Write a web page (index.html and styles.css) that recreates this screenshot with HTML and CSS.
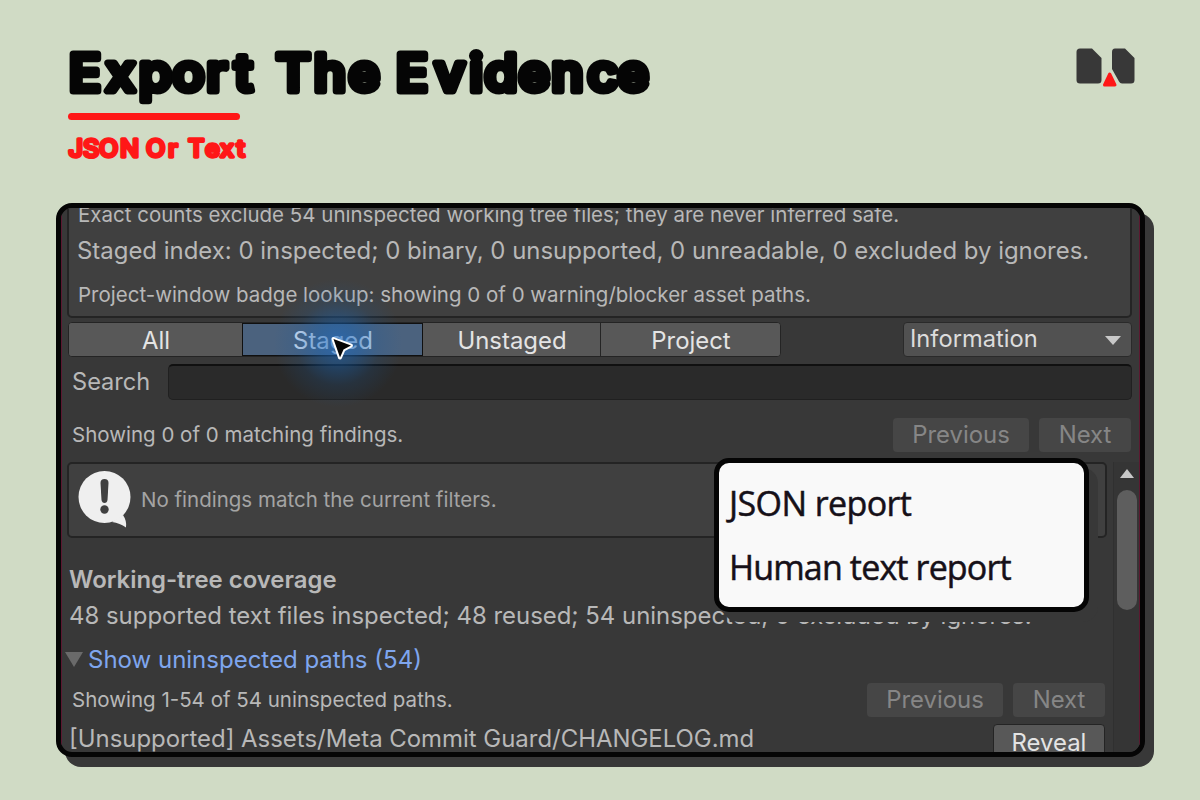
FILE: index.html
```html
<!DOCTYPE html>
<html lang="en">
<head>
    <meta charset="UTF-8">
    <meta name="viewport" content="width=device-width, initial-scale=1.0">
    <title>Export The Evidence</title>
    <link rel="stylesheet" href="styles.css">
</head>
<body>
    <header class="header">
        <div class="titles">
            <h1 class="title">
                <svg width="600" height="69" viewBox="0 0 600 69">
                    <g transform="scale(1.05 1)">
                        <text y="47" x="1 36 67.600 99.500 131.900 158.500">Export</text>
                        <text y="47" x="198.100 234.300 267.100">The</text>
                        <text y="47" x="312.400 349 382.400 396.700 429 460.500 494.800 523.300">Evidence</text>
                    </g>
                </svg>
            </h1>
            <div class="underline"></div>
            <h2 class="subtitle">
                <svg width="200" height="36" viewBox="0 0 200 36">
                    <g transform="scale(1.05 1)">
                        <text y="25.500" x="0.500 14.300 29.500 49.500">JSON</text>
                        <text y="25.500" x="74.300 95.200">Or</text>
                        <text y="25.500" x="114.300 130.500 144.800 160.500">Text</text>
                    </g>
                </svg>
            </h2>
        </div>
        <svg class="logo" width="60" height="40" viewBox="0 0 60 40">
            <path class="logo-page" d="M4 0.500H16L25.500 10V32Q25.500 35.500 22 35.500H4Q0.500 35.500 0.500 32V4Q0.500 0.500 4 0.500Z"/>
            <path class="logo-page" d="M39 0.500H49L58.500 10V32Q58.500 35.500 55 35.500H46Q44 35.500 43 33.500L36 21V4Q36 0.500 39 0.500Z"/>
            <path class="logo-mark" d="M33.700 26L39 37H28.500Z"/>
        </svg>
    </header>

    <main class="panel">
        <section class="info-box">
            <p class="small line-1">Exact counts exclude 54 uninspected working tree files; they are never inferred safe.</p>
            <p class="big line-2">Staged index: 0 inspected; 0 binary, 0 unsupported, 0 unreadable, 0 excluded by ignores.</p>
            <p class="small line-3">Project-window badge lookup: showing 0 of 0 warning/blocker asset paths.</p>
        </section>

        <div class="toolbar">
            <div class="tabs">
                <button class="tab tab-all">All</button>
                <button class="tab tab-staged active">Staged</button>
                <button class="tab tab-unstaged">Unstaged</button>
                <button class="tab tab-project">Project</button>
            </div>
            <div class="dropdown"><span>Information</span><i class="arrow-down"></i></div>
        </div>

        <div class="search">
            <label for="search">Search</label>
            <input type="text" id="search">
        </div>

        <div class="pager">
            <span class="small">Showing 0 of 0 matching findings.</span>
            <button class="btn previous" disabled>Previous</button>
            <button class="btn next" disabled>Next</button>
        </div>

        <div class="results">
            <div class="list">
                <div class="empty">
                    <svg width="56" height="60" viewBox="0 0 56 60">
                        <circle class="bubble" cx="26.500" cy="27" r="26"/>
                        <path class="bubble" d="M34 52Q42 53 48 57.500Q49 51 45 45Z"/>
                        <path class="bubble-mark" d="M22.500 13Q22.500 9 26.500 9T30.500 13L29.500 30Q29 33 26.500 33T23.500 30Z"/>
                        <circle class="bubble-mark" cx="26.500" cy="39.500" r="4.200"/>
                    </svg>
                    <span class="small">No findings match the current filters.</span>
                </div>
                <h3 class="coverage">Working-tree coverage</h3>
                <p class="big summary">48 supported text files inspected; 48 reused; 54 uninspected, 0 excluded by ignores.</p>
                <div class="foldout"><i class="fold-arrow"></i>Show uninspected paths (54)</div>
                <div class="pager paths-pager">
                    <span class="small">Showing 1-54 of 54 uninspected paths.</span>
                    <button class="btn previous" disabled>Previous</button>
                    <button class="btn next" disabled>Next</button>
                </div>
                <div class="path">
                    <span class="big">[Unsupported] Assets/Meta Commit Guard/CHANGELOG.md</span>
                    <button class="reveal">Reveal</button>
                </div>
            </div>
            <div class="scrollbar">
                <i class="arrow-up"></i>
                <div class="thumb"></div>
            </div>
        </div>

        <div class="glow"></div>
        <svg class="cursor" width="30" height="30" viewBox="0 0 30 30">
            <path d="M3.500 5L21 11.500L13.500 15.500L10 23.500Z"/>
        </svg>

        <div class="menu">
            <div class="menu-item json">JSON report</div>
            <div class="menu-item human">Human text report</div>
        </div>
    </main>
</body>
</html>
```

FILE: styles.css
```css
* {
    box-sizing: border-box;
}

body {
    margin: 0;
    width: 1200px;
    height: 800px;
    overflow: hidden;
    background-color: #d0dbc5;
    font-family: Inter, "Liberation Sans", sans-serif;
    color: #b8b8b8;
}

h1, h2, h3, p {
    margin: 0;
}

svg {
    display: block;
    overflow: visible;
}

button {
    font-family: inherit;
    padding: 0;
}

.header {
    display: flex;
    justify-content: space-between;
    height: 203px;
    padding: 44px 64px 0 68px;
}

.title {
    height: 69px;
}

.title text {
    font-size: 50.500px;
    font-weight: 500;
    fill: #050505;
    stroke: #050505;
    stroke-width: 7px;
    stroke-linejoin: round;
}

.underline {
    width: 172px;
    height: 7px;
    border-radius: 4px;
    background-color: #ff1717;
}

.subtitle {
    margin-top: 12px;
}

.subtitle text {
    font-size: 24px;
    font-weight: 500;
    fill: #ff1717;
    stroke: #ff1717;
    stroke-width: 3.300px;
    stroke-linejoin: round;
}

.logo {
    margin-top: 4px;
}

.logo-page {
    fill: #383838;
}

.logo-mark {
    fill: #ff1717;
    stroke: #ff1717;
    stroke-width: 3px;
    stroke-linejoin: round;
}

.panel {
    position: relative;
    width: 1089px;
    height: 554px;
    margin-left: 56px;
    border: 5px solid #050505;
    border-radius: 16px;
    background-color: #383838;
    box-shadow: 9px 10px 0 #383838;
    overflow: hidden;
}

/* thin wine-coloured edge on both sides */
.panel::after {
    content: "";
    position: absolute;
    inset: 0;
    border: solid #5c1830;
    border-width: 0 1px;
}

.small {
    font-size: 20.500px;
    white-space: nowrap;
}

.big {
    font-size: 23.930px;
    white-space: nowrap;
}

.info-box {
    width: 1065px;
    height: 120px;
    margin: -10px 0 0 6px;
    padding: 2px 8px 0;
    border: 2px solid #242424;
    border-radius: 5px;
    background-color: #404040;
}

.line-1 {
    line-height: 26px;
    padding-left: 1px;
}

.line-2 {
    line-height: 45px;
}

.line-3 {
    line-height: 43px;
    padding-left: 1px;
}

.toolbar {
    display: flex;
    justify-content: space-between;
    height: 35px;
    margin: 4px 8px 0 7px;
}

.tabs {
    display: flex;
    width: 713px;
    border: 1px solid #242424;
    border-radius: 4px;
    background-color: #585858;
    overflow: hidden;
}

.tab {
    padding: 1px 0 0 1px;
    border: 0;
    border-right: 1px solid #242424;
    background-color: #585858;
    color: #e4e4e4;
    font-size: 23.900px;
}

.tab-all {
    width: 173px;
    border-right: 0;
}

.tab-staged {
    width: 181px;
}

.tab-unstaged {
    width: 178px;
}

.tab-project {
    flex: 1;
    border-right: 0;
}

.tab.active {
    border: 1px solid #101010;
    background-color: #4b627e;
    color: #d5e2f5;
}

.dropdown {
    display: flex;
    justify-content: space-between;
    align-items: center;
    width: 229px;
    padding: 0 10px 2px 6px;
    border: 1px solid #2a2a2a;
    border-radius: 4px;
    background-color: #515151;
    color: #dcdcdc;
    font-size: 23.700px;
}

.arrow-down {
    border: 8px solid transparent;
    border-top: 9px solid #c8c8c8;
    border-bottom: 0;
    margin-top: 4px;
}

.search {
    display: flex;
    align-items: center;
    height: 36px;
    margin: 7px 8px 0 11px;
    font-size: 23.600px;
}

.search label {
    width: 96px;
    padding-bottom: 1px;
}

.search input {
    flex: 1;
    height: 36px;
    border: 1px solid #202020;
    border-top: 2px solid #101010;
    border-radius: 5px;
    background-color: #2a2a2a;
}

.pager {
    display: flex;
    align-items: center;
    height: 34px;
    margin: 18px 9px 0 11px;
}

.pager .small {
    flex: 1;
    padding-bottom: 2px;
}

.btn {
    height: 34px;
    padding-bottom: 1px;
    border: 0;
    border-radius: 4px;
    background-color: #464646;
    color: #868686;
    font-size: 23.900px;
}

.previous {
    width: 136px;
    margin-right: 10px;
}

.next {
    width: 92px;
}

.results {
    display: flex;
    height: 290px;
    margin-top: 10px;
}

.list {
    width: 1052px;
}

.empty {
    display: flex;
    align-items: center;
    width: 1040px;
    height: 76px;
    margin-left: 6px;
    padding-left: 9px;
    border: 2px solid #242424;
    border-radius: 5px;
    background-color: #404040;
    color: #a4a4a4;
}

.empty .small {
    margin-left: 7px;
    padding-bottom: 2px;
}

.bubble {
    fill: #efefef;
}

.bubble-mark {
    fill: #404040;
}

.coverage {
    margin: 24px 0 0 8px;
    font-size: 23.900px;
    font-weight: 600;
    line-height: 36px;
}

.summary {
    margin-left: 8px;
    line-height: 36px;
}

.foldout {
    display: flex;
    align-items: center;
    height: 36px;
    margin: 7px 0 0 4px;
    color: #7fa6ee;
    font-size: 24px;
}

.fold-arrow {
    margin-right: 5px;
    border: 9px solid transparent;
    border-top: 15px solid #6a6a6a;
    border-bottom: 0;
}

.paths-pager {
    margin: 6px 8px 0 11px;
}

.path {
    display: flex;
    justify-content: space-between;
    margin: 7px 8px 0 8px;
}

.path .big {
    line-height: 30px;
}

.reveal {
    width: 112px;
    height: 37px;
    border: 1px solid #242424;
    border-radius: 4px;
    background-color: #585858;
    color: #e4e4e4;
    font-size: 23.900px;
}

.scrollbar {
    flex: 1;
    display: flex;
    flex-direction: column;
    align-items: center;
    padding-top: 7px;
    border-left: 1px solid #303030;
    background-color: #353535;
}

.arrow-up {
    border: 7px solid transparent;
    border-top: 0;
    border-bottom: 9px solid #c8c8c8;
}

.thumb {
    width: 20px;
    height: 120px;
    margin-top: 12px;
    border-radius: 10px;
    background-color: #5e5e5e;
}

.glow {
    position: absolute;
    left: 212px;
    top: 70px;
    width: 130px;
    height: 130px;
    background: radial-gradient(circle, rgba(30, 105, 190, 0.65) 0%, rgba(25, 98, 175, 0.48) 22%, rgba(22, 90, 160, 0.17) 46%, rgba(20, 85, 150, 0) 70%);
}

.cursor {
    position: absolute;
    left: 269px;
    top: 126px;
}

.cursor path {
    fill: #050505;
    stroke: #ffffff;
    stroke-width: 4px;
    stroke-linejoin: round;
    paint-order: stroke;
}

.menu {
    position: absolute;
    left: 653px;
    top: 250px;
    width: 375px;
    height: 154px;
    padding: 8px 10px;
    border: 5px solid #050505;
    border-radius: 15px;
    background-color: #f9f9f9;
    box-shadow: 9px 10px 0 #383838;
    color: #161018;
    font-family: "Open Sans", "Noto Sans", sans-serif;
    font-size: 34px;
    -webkit-text-stroke: 0.500px #161018;
}

.menu-item {
    height: 64px;
    line-height: 64px;
    white-space: nowrap;
}

.json {
    letter-spacing: -0.600px;
}

.human {
    letter-spacing: -0.850px;
}
```
